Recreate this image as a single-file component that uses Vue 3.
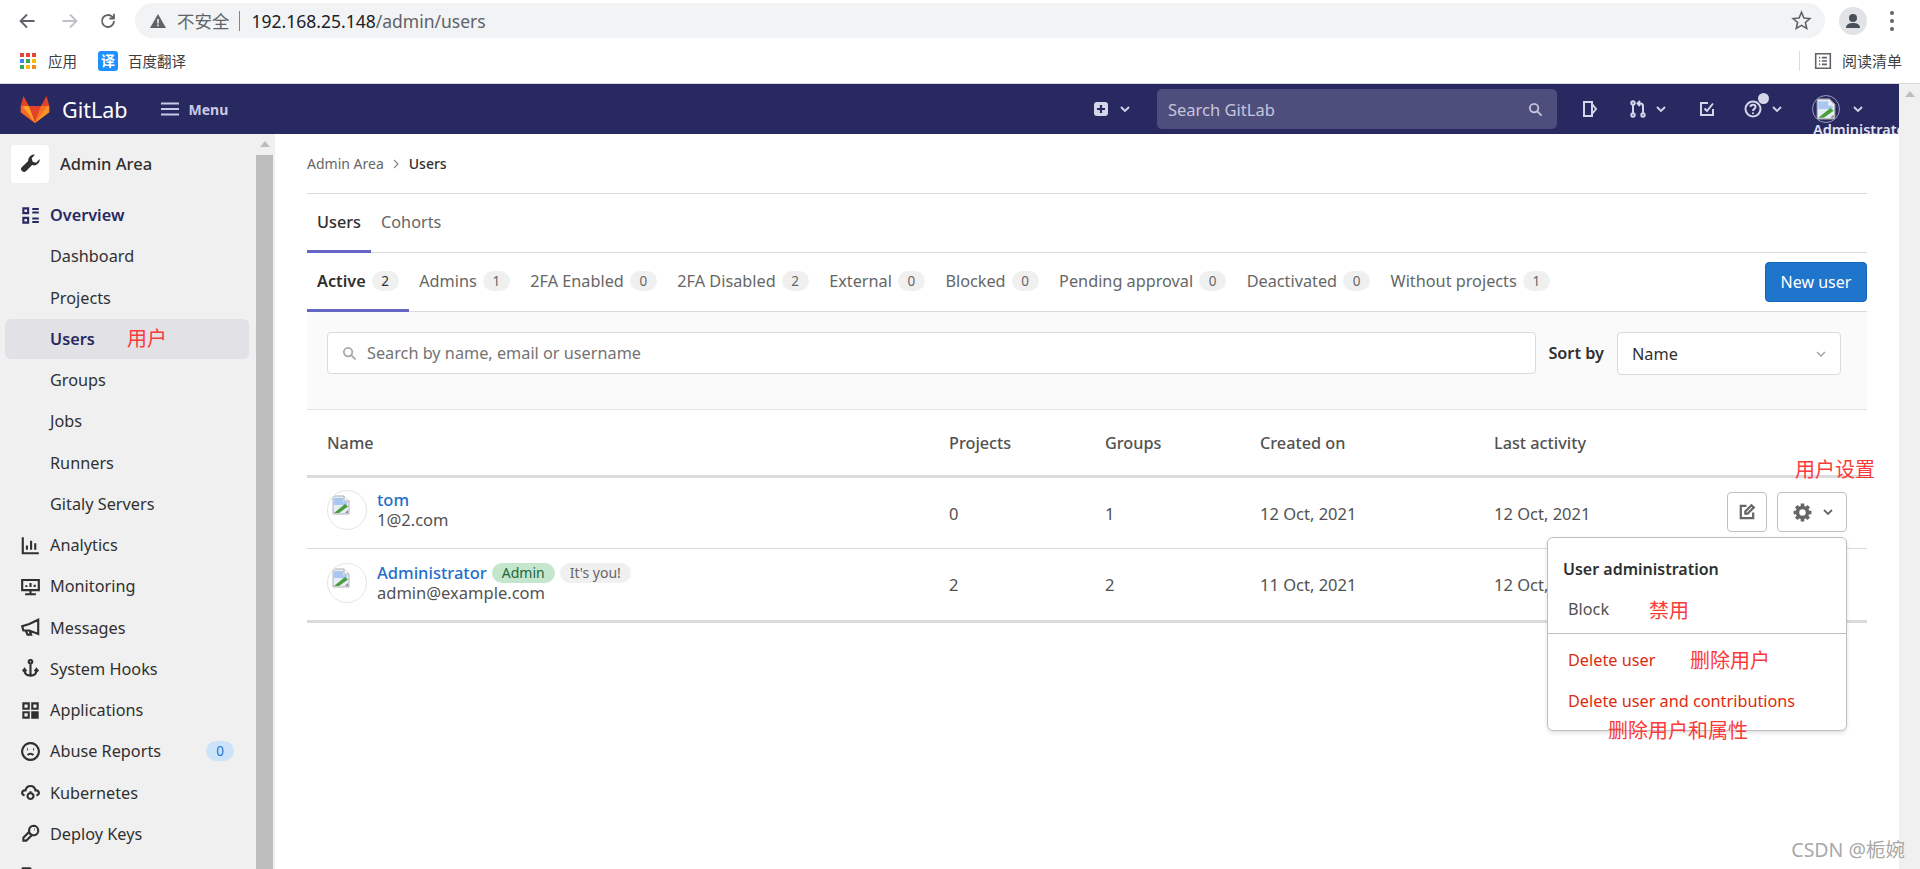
<template>
  <div class="page">
    <!-- browser chrome -->
    <div class="toolbar">
      <svg class="tb-icon back" viewBox="0 0 18 18"><path d="M16.5 9H2.5M9 2.5 2.5 9 9 15.5" /></svg>
      <svg class="tb-icon forward" viewBox="0 0 18 18"><path d="M1.5 9h14M9 2.5 15.5 9 9 15.5" /></svg>
      <svg class="tb-icon reload" viewBox="0 0 18 18"><path d="M15 9a6 6 0 1 1-1.8-4.3L15 6.5M15 1.8v4.7h-4.7" /></svg>
      <div class="omnibox">
        <svg class="warn" viewBox="0 0 16 16"><path d="M8 1 16 15H0z" fill="#5f6368" /><path d="M7.2 6h1.6v4.6H7.2zM7.2 11.6h1.6v1.6H7.2z" fill="#f1f3f4" /></svg>
        <span class="insecure">不安全</span>
        <span class="sep"></span>
        <span class="url">192.168.25.148<em>/admin/users</em></span>
        <svg class="star" viewBox="0 0 20 20"><path d="M10 2.2 12.3 7.6 18 8.1 13.7 11.9 15 17.6 10 14.6 5 17.6 6.3 11.9 2 8.1 7.7 7.6z" /></svg>
      </div>
      <div class="profile">
        <svg viewBox="0 0 28 28" width="28" height="28"><circle cx="14" cy="14" r="14" fill="#e1e3e7" /><circle cx="14" cy="11" r="4" fill="#4a5058" /><path d="M7 21c0-4 3.500-5 7-5s7 1 7 5z" fill="#4a5058" /></svg>
      </div>
      <div class="dots"><i></i><i></i><i></i></div>
    </div>
    <div class="bookmarks">
      <div class="apps"><i v-for="c in appColors" :key="c.id" :style="{ background: c.color }"></i></div>
      <span class="bm-text">应用</span>
      <span class="baidu">译</span>
      <span class="bm-text">百度翻译</span>
      <span class="bm-sep"></span>
      <svg class="reading" viewBox="0 0 16 16"><path d="M1.500 1.500h13v13h-13zM4.500 5h1M7 5h4.500M4.500 8h1M7 8h4.500M4.500 11h1M7 11h4.500" /></svg>
      <span class="bm-text">阅读清单</span>
    </div>

    <!-- gitlab navbar -->
    <div class="navrow">
      <header class="navbar">
        <svg class="logo" viewBox="0 0 30 28">
          <path d="M15 28 0.700 17.300 3.500 2 8.800 11h12.400L26.500 2l2.800 15.300z" fill="#e24329" />
          <path d="M15 28 8.800 11H0.700l-0 6.300z" fill="#fc6d26" opacity=".9" />
          <path d="M15 28 21.200 11h8.100v6.300z" fill="#fca326" opacity=".85" />
          <path d="M15 28 8.800 11H2.700z" fill="#fca326" />
          <path d="M15 28 21.200 11h6.100z" fill="#fc6d26" />
          <path d="M3.500 1 0.700 11h8.100zM26.500 1l2.800 10h-8.100z" fill="#e24329" />
        </svg>
        <span class="brand">GitLab</span>
        <svg class="burger" viewBox="0 0 18 14"><path d="M0 1.500h18M0 7h18M0 12.500h18" /></svg>
        <span class="menu">Menu</span>
        <div class="nav-right">
          <svg class="plus" viewBox="0 0 14 14"><rect width="14" height="14" rx="3" fill="#d5d5ea" /><path d="M7 3v8M3 7h8" stroke="#292961" stroke-width="2.200" /></svg>
          <svg class="chev first" viewBox="0 0 10 6"><path d="M1 1l4 4 4-4" /></svg>
          <div class="nav-search">
            <span>Search GitLab</span>
            <svg viewBox="0 0 16 16"><circle cx="6.500" cy="6.500" r="4.500" /><path d="M10 10l4.500 4.500" /></svg>
          </div>
          <svg class="nav-icon issues" viewBox="0 0 18 18"><path d="M3 2h8v14H3zM11 4l4 5-4 5" /></svg>
          <svg class="nav-icon mr" viewBox="0 0 18 18"><circle cx="4" cy="3" r="1.700" /><circle cx="4" cy="15" r="1.700" /><circle cx="14" cy="15" r="1.700" /><path d="M4 5v8M14 13V6c0-1.500-1-2.500-2.500-2.500H9M11 1 8.500 3.500 11 6" /></svg>
          <svg class="chev mr-chev" viewBox="0 0 10 6"><path d="M1 1l4 4 4-4" /></svg>
          <svg class="nav-icon todo" viewBox="0 0 18 18"><path d="M15 9v6H3V3h7M6.500 8.500 9 11l6-7.500" /></svg>
          <div class="help">
            <svg class="nav-icon" viewBox="0 0 18 18"><circle cx="9" cy="9" r="7.500" /><path d="M6.500 7c0-1.500 1.200-2.300 2.500-2.300s2.500.8 2.500 2.200c0 2-2.500 2-2.500 4M9 12.500v1.500" /></svg>
            <i></i>
          </div>
          <svg class="chev help-chev" viewBox="0 0 10 6"><path d="M1 1l4 4 4-4" /></svg>
          <div class="nav-user">
            <div class="nav-avatar"><svg viewBox="0 0 20 20" width="22" height="22"><path d="M2 1h11l5 5v13H2z" fill="#e8eef8" stroke="#b0b0b0" /><path d="M3 3h9v4l4 0v3H3z" fill="#a9c7f0" /><path d="M3 18l11-9 3 2.500L8 18z" fill="#4a9e3c" /><path d="M14 18l3-3v3z" fill="#888" /></svg></div>
            <span class="nav-username">Administrator</span>
          </div>
          <svg class="chev user-chev" viewBox="0 0 10 6"><path d="M1 1l4 4 4-4" /></svg>
        </div>
      </header>
      <div class="page-scroll head"><span class="arrow"></span></div>
    </div>

    <div class="body">
      <!-- sidebar -->
      <aside class="sidebar">
        <div class="side-inner">
          <div class="side-title">
            <span class="wrench">
              <svg viewBox="0 0 18 18"><path d="M17 4.800a5 5 0 0 1-6.600 4.700L5.300 14.600a2.500 2.500 0 1 1-3.600-3.500l5.300-5.200A5 5 0 0 1 12.800 .6L10 3.700l.9 2.900 2.900.8 2.900-2.900c.2.100.3.200.3.300z" /></svg>
            </span>
            <span>Admin Area</span>
          </div>
          <div
            v-for="item in sideItems"
            :key="item.label"
            class="side-item"
            :class="{ sub: !item.icon, active: item.active, current: item.current }"
          >
            <svg v-if="item.icon" class="side-icon" viewBox="0 0 16 16"><path :d="item.icon" /></svg>
            <span>{{ item.label }}</span>
            <span v-if="item.count !== undefined" class="side-count">{{ item.count }}</span>
            <span v-if="item.note" class="note side-note">{{ item.note }}</span>
          </div>
        </div>
        <div class="side-scroll">
          <span class="arrow"></span>
          <div class="side-thumb"></div>
        </div>
      </aside>

      <!-- content -->
      <main class="content">
        <div class="crumbs">
          <span>Admin Area</span>
          <svg viewBox="0 0 6 10"><path d="M1 1l4 4-4 4" /></svg>
          <b>Users</b>
        </div>
        <nav class="top-tabs">
          <span class="top-tab on">Users</span>
          <span class="top-tab">Cohorts</span>
        </nav>
        <div class="filter-row">
          <div v-for="tab in filterTabs" :key="tab.label" class="filter-tab" :class="{ on: tab.active }">
            <span>{{ tab.label }}</span>
            <span class="count">{{ tab.count }}</span>
          </div>
          <button class="new-user">New user</button>
        </div>
        <div class="filter-panel">
          <div class="search-box">
            <svg viewBox="0 0 16 16"><circle cx="6.500" cy="6.500" r="4.500" /><path d="M10 10l4.500 4.500" /></svg>
            <span>Search by name, email or username</span>
          </div>
          <span class="sort-label">Sort by</span>
          <div class="sort-select">
            <span>Name</span>
            <svg viewBox="0 0 10 6"><path d="M1 1l4 4 4-4" /></svg>
          </div>
        </div>

        <div class="table-head grid">
          <span>Name</span><span>Projects</span><span>Groups</span><span>Created on</span><span>Last activity</span>
        </div>
        <div v-for="user in users" :key="user.name" class="user-row grid" :class="{ last: user.last }">
          <div class="user-cell">
            <div class="avatar">
              <svg viewBox="0 0 20 20" width="20" height="20"><path d="M2 1h11l5 5v13H2z" fill="#e8eef8" stroke="#b0b0b0" /><path d="M13 1v5h5" fill="#fff" stroke="#b0b0b0" /><path d="M3 3h9v4l4 0v3H3z" fill="#a9c7f0" /><path d="M3 18l11-9 3 2.500L8 18z" fill="#4a9e3c" /><path d="M14 18l3-3v3z" fill="#888" /></svg>
            </div>
            <div class="user-text">
              <div class="user-name">
                <a>{{ user.name }}</a>
                <span v-if="user.isAdmin" class="pill green">Admin</span>
                <span v-if="user.isAdmin" class="pill grey">It's you!</span>
              </div>
              <div class="user-mail">{{ user.email }}</div>
            </div>
          </div>
          <span>{{ user.projects }}</span>
          <span>{{ user.groups }}</span>
          <span>{{ user.created }}</span>
          <span>{{ user.activity }}</span>
          <div v-if="user.actions" class="actions">
            <button class="act edit">
              <svg viewBox="0 0 16 16"><path d="M13.500 8.500v5h-11v-11h5M6.500 7.500v2h2L14 4l-2-2z" /></svg>
            </button>
            <button class="act gear">
              <svg class="gear-icon" viewBox="0 0 20 20"><circle cx="10" cy="10" r="4.800" /><path d="M10 1.500v3.500M10 15v3.500M1.500 10H5M15 10h3.500M4 4l2.500 2.500M13.500 13.500 16 16M16 4l-2.500 2.500M6.500 13.500 4 16" /></svg>
              <svg class="gear-chev" viewBox="0 0 10 6"><path d="M1 1l4 4 4-4" /></svg>
            </button>
            <span class="note settings-note">用户设置</span>
            <div class="dropdown">
              <div class="dd-title">User administration</div>
              <div class="dd-item">Block<span class="note block-note">禁用</span></div>
              <div class="dd-line"></div>
              <div class="dd-item red">Delete user<span class="note del-note">删除用户</span></div>
              <div class="dd-item red">Delete user and contributions</div>
              <span class="note all-note">删除用户和属性</span>
            </div>
          </div>
        </div>
      </main>
      <div class="page-scroll"></div>
    </div>
    <span class="watermark">CSDN @栀婉</span>
  </div>
</template>

<script setup>
const colors = ['#ea4335', '#ea4335', '#ea4335', '#4285f4', '#34a853', '#fbbc05', '#34a853', '#fbbc05', '#f28b1e']
const appColors = colors.map((color, id) => ({ id, color }))

const sideItems = [
  { label: 'Overview', active: true, icon: 'M2 2h4v4H2zM2 10h4v4H2zM9.500 2.500H15M9.500 5.500H15M9.500 10.500H15M9.500 13.500H15' },
  { label: 'Dashboard' },
  { label: 'Projects' },
  { label: 'Users', current: true, note: '用户' },
  { label: 'Groups' },
  { label: 'Jobs' },
  { label: 'Runners' },
  { label: 'Gitaly Servers' },
  { label: 'Analytics', icon: 'M1.500 1v13.500H15M5 8v3.500M8.500 4v7.500M12 6v5.500' },
  { label: 'Monitoring', icon: 'M1 2.500h14v8.500H1zM4.500 8.500V7M8 8.500V5M11.500 8.500V6.500M8 11v3M3.500 14.500h9' },
  { label: 'Messages', icon: 'M14.500 1.500v12L7 10.500H2L1 7l6-2zM4 10.500l1.500 3.500h3l-1.200-3' },
  { label: 'System Hooks', icon: 'M8 3.500V14M8 14c-3 0-5-1.500-5-4.500M8 14c3 0 5-1.500 5-4.500M1.500 10.500 3 8.500l1.500 2M11.500 10.500l1.500-2 1.500 2M8 .8a1.500 1.500 0 1 0 .01 0' },
  { label: 'Applications', icon: 'M2 2h4.500v4.500H2zM9.500 2H14v4.500H9.500zM2 9.500h4.500V14H2zM9.500 9.500H14V14H9.500zM11 11h1.500v1.500H11z' },
  { label: 'Abuse Reports', count: 0, icon: 'M8 1a7 7 0 1 0 .01 0M5 6.200h.8M10.200 6.200h.8M5.500 11c1.500-1.500 3.500-1.500 5 0' },
  { label: 'Kubernetes', icon: 'M3 10.500C1.500 10 .8 9 1 8c.3-1.300 1.500-2 2.800-1.800C4.300 3.800 6 2.500 8 2.500s3.700 1.300 4.200 3.700c1.300-.2 2.500.5 2.800 1.800.2 1-.5 2-2 2.500M8 8.500a2.500 2.500 0 1 0 .01 0M8 7v1M8 13v1M5.500 10h1M9.500 10h1' },
  { label: 'Deploy Keys', icon: 'M10.500 1.500a4 4 0 1 1-3.800 5.200L2 11.500V14h2.500l4.800-4.800a4 4 0 0 1 1.200-7.700zM11 4.500h.5' },
  { label: 'Labels', icon: 'M1.500 2h6l7 7-5.500 5.500-7.500-7z' }
]

const filterTabs = [
  { label: 'Active', count: 2, active: true },
  { label: 'Admins', count: 1 },
  { label: '2FA Enabled', count: 0 },
  { label: '2FA Disabled', count: 2 },
  { label: 'External', count: 0 },
  { label: 'Blocked', count: 0 },
  { label: 'Pending approval', count: 0 },
  { label: 'Deactivated', count: 0 },
  { label: 'Without projects', count: 1 }
]

const users = [
  { name: 'tom', email: '1@2.com', projects: 0, groups: 1, created: '12 Oct, 2021', activity: '12 Oct, 2021', actions: true },
  { name: 'Administrator', email: 'admin@example.com', projects: 2, groups: 2, created: '11 Oct, 2021', activity: '12 Oct, 2021', isAdmin: true, last: true }
]
</script>

<style>
html, body { margin: 0; overflow: hidden; background: #fff; }
</style>

<style scoped>
* { box-sizing: border-box; }
.page {
  position: relative;
  height: 869px;
  overflow: hidden;
  font-family: "Noto Sans", "Noto Sans CJK SC", sans-serif;
  font-size: 16.250px;
  color: #525252;
}

/* browser chrome */
.toolbar { height: 41px; display: flex; align-items: center; padding-bottom: 0; }
.tb-icon { width: 18px; height: 18px; fill: none; stroke: #5f6368; stroke-width: 1.800; flex: none; }
.back { margin-left: 18px; }
.forward { margin-left: 25px; stroke: #bdc1c6; }
.reload { margin-left: 20px; }
.omnibox {
  margin-left: 18px;
  width: 1690px;
  height: 35px;
  margin-top: 0;
  background: #f1f3f4;
  border-radius: 18px;
  display: flex;
  align-items: center;
  padding-left: 15px;
}
.warn { width: 16px; height: 16px; flex: none; }
.insecure { margin-left: 11px; font-size: 17.500px; color: #5f6368; }
.sep { width: 1px; height: 20px; background: #80868b; margin: 0 12px 0 9px; }
.url { font-size: 17.500px; color: #202124; }
.url em { font-style: normal; color: #5f6368; }
.star { width: 21px; height: 21px; margin-left: auto; margin-right: 13px; fill: none; stroke: #5f6368; stroke-width: 1.500; }
.profile { margin-left: 14px; width: 28px; height: 28px; }
.dots { margin-left: 23px; display: flex; flex-direction: column; gap: 4px; }
.dots i { width: 4px; height: 4px; border-radius: 50%; background: #5f6368; }

.bookmarks { height: 43px; display: flex; align-items: center; border-bottom: 1px solid #dadce0; padding-left: 20px; padding-bottom: 3px; }
.apps { width: 16px; height: 16px; display: grid; grid-template-columns: repeat(3, 4px); grid-template-rows: repeat(3, 4px); gap: 2px; }
.bm-text { font-size: 14.500px; color: #3c4043; margin-left: 12px; }
.baidu { margin-left: 21px; width: 20px; height: 20px; border-radius: 3px; background: #1e90ff; color: #fff; font-size: 14px; line-height: 20px; text-align: center; font-weight: 700; }
.baidu + .bm-text { margin-left: 10px; }
.bm-sep { margin-left: auto; width: 1px; height: 20px; background: #dadce0; }
.reading { width: 18px; height: 18px; margin-left: 14px; fill: none; stroke: #5f6368; stroke-width: 1.400; }
.reading + .bm-text { margin-left: 10px; margin-right: 18px; font-size: 15px; }

/* navbar */
.navrow { display: flex; height: 50px; }
.navbar { flex: 1; background: #292961; display: flex; align-items: center; padding-left: 20px; overflow: hidden; }
.logo { width: 30px; height: 28px; flex: none; }
.brand { margin-left: 12px; color: #fff; font-size: 21.500px; }
.burger { width: 18px; height: 14px; margin-left: 33px; fill: none; stroke: #c9c9e6; stroke-width: 2; }
.menu { margin-left: 10px; color: #c9c9e6; font-size: 14px; font-weight: 700; }
.nav-right { margin-left: auto; display: flex; align-items: center; }
.chev { width: 10px; height: 6px; fill: none; stroke: #d5d5ea; stroke-width: 1.800; flex: none; }
.plus { width: 14px; height: 14px; }
.chev.first { margin-left: 12px; }
.nav-search {
  margin-left: 27px;
  width: 400px;
  height: 40px;
  border-radius: 5px;
  background: #4e4e7d;
  color: #c5c5dc;
  display: flex;
  align-items: center;
  justify-content: space-between;
  padding: 0 14px 0 11px;
  font-size: 16.500px;
}
.nav-search svg { width: 15px; height: 15px; fill: none; stroke: #c5c5dc; stroke-width: 2; }
.nav-icon { width: 18px; height: 18px; fill: none; stroke: #d5d5ea; stroke-width: 2; flex: none; display: block; }
.issues { margin-left: 24px; }
.mr { margin-left: 30px; }
.mr-chev { margin-left: 9px; }
.todo { margin-left: 32px; }
.help { position: relative; margin-left: 28px; }
.help i { position: absolute; right: -7px; top: -7px; width: 11px; height: 11px; border-radius: 50%; background: #d5d5ea; }
.help-chev { margin-left: 10px; }
.nav-user { position: relative; margin-left: 30px; width: 28px; height: 28px; }
.nav-avatar { width: 28px; height: 28px; border-radius: 50%; border: 1px solid #9a9abf; overflow: hidden; display: flex; align-items: center; padding-left: 2px; }
.nav-username { position: absolute; left: 1px; top: 25px; color: #e4e4f2; font-size: 14.500px; font-weight: 600; line-height: 18px; white-space: nowrap; }
.user-chev { margin-left: 13px; margin-right: 36px; }
.page-scroll { width: 21px; background: #f0f0f0; flex: none; position: relative; }
.page-scroll.head { height: 50px; }
.arrow { position: absolute; left: 50%; top: 7px; margin-left: -5px; border: 5px solid transparent; border-top: 0; border-bottom: 6px solid #bdbdbd; }

/* sidebar */
.body { display: flex; height: 735px; }
.sidebar { width: 275px; flex: none; background: #f0f0f0; display: flex; overflow: hidden; }
.side-inner { width: 256px; flex: none; padding: 0 7px 0 5px; }
.side-title { height: 61px; margin-top: 0; padding: 11px 0 0 6px; display: flex; align-items: flex-start; color: #303030; font-weight: 500; font-size: 16.500px; }
.side-title > span:last-child { margin-left: 11px; line-height: 38px; }
.wrench { width: 38px; height: 38px; flex: none; border-radius: 4px; background: #fff; display: flex; align-items: center; justify-content: center; }
.wrench svg { width: 21px; height: 21px; fill: #303030; }
.side-item {
  position: relative;
  height: 40px;
  margin-bottom: 1.250px;
  border-radius: 6px;
  display: flex;
  align-items: center;
  color: #303030;
  padding-left: 16px;
}
.side-item.sub { padding-left: 45px; }
.side-icon { width: 19px; height: 19px; flex: none; margin-right: 10px; fill: none; stroke: #303030; stroke-width: 1.800; }
.side-item.active { color: #292961; font-weight: 600; }
.side-item.active .side-icon { stroke: #292961; }
.side-item.current { background: #e1e1e6; color: #292961; font-weight: 600; }
.side-count { margin-left: auto; margin-right: 15px; width: 28px; height: 20px; border-radius: 10px; background: #cbe2f9; color: #1f75cb; font-size: 13.500px; line-height: 20px; text-align: center; }
.side-scroll { position: relative; width: 17px; flex: none; }
.side-thumb { position: absolute; left: 0; right: 0; top: 21px; bottom: 0; background: #bdbdbd; }

/* content */
.content { flex: 1; min-width: 0; padding: 0 32px; position: relative; }
.crumbs { height: 59px; display: flex; align-items: center; font-size: 14px; color: #666; }
.crumbs svg { width: 6px; height: 10px; margin: 0 10px 0 9px; fill: none; stroke: #888; stroke-width: 1.200; }
.crumbs b { font-weight: 500; color: #303030; }
.top-tabs { height: 60px; border-top: 1px solid #dbdbdb; border-bottom: 1px solid #dbdbdb; display: flex; }
.top-tab { padding: 0 10px; margin-bottom: -1px; line-height: 57px; color: #666; }
.top-tab.on { color: #303030; font-weight: 500; border-bottom: 3px solid #6666c4; }
.filter-row { height: 59px; border-bottom: 1px solid #dbdbdb; display: flex; }
.filter-tab { height: 59px; display: flex; align-items: center; padding: 0 10.500px 0 10px; gap: 6px; color: #666; font-size: 16.250px; border-bottom: 3px solid transparent; white-space: nowrap; }
.filter-tab.on { color: #303030; font-weight: 600; border-bottom-color: #6666c4; }
.count { width: 27px; height: 20px; border-radius: 10px; background: #f0f0f0; font-size: 13.500px; font-weight: 400; line-height: 20px; text-align: center; color: #666; }
.filter-tab.on .count { color: #303030; }
.new-user { margin-left: auto; margin-top: 9px; width: 102px; height: 40px; border: 1px solid #1068bf; border-radius: 4px; background: #1f75cb; color: #fff; font: inherit; font-size: 16px; padding: 0; }
.filter-panel { height: 98px; background: #fafafa; border-bottom: 1px solid #e5e5e5; display: flex; align-items: flex-start; padding: 20px 26px 0 20px; }
.search-box { flex: 1; height: 42px; background: #fff; border: 1px solid #dbdbdb; border-radius: 4px; display: flex; align-items: center; padding-left: 14px; color: #737373; }
.search-box svg { width: 15px; height: 15px; margin-right: 10px; fill: none; stroke: #aaa; stroke-width: 2; }
.sort-label { margin-left: 12px; line-height: 42px; color: #303030; font-weight: 600; }
.sort-select { margin-left: 13px; width: 224px; height: 43px; background: #fff; border: 1px solid #dbdbdb; border-radius: 4px; display: flex; align-items: center; justify-content: space-between; padding: 0 14px 0 14px; color: #303030; }
.sort-select svg { width: 10px; height: 6px; fill: none; stroke: #aaa; stroke-width: 1.600; }

.grid { display: grid; grid-template-columns: 622px 156px 155px 234px 1fr; padding-left: 20px; align-items: center; }
.table-head { height: 68px; border-bottom: 3px solid #dbdbdb; color: #525252; font-weight: 500; }
.user-row { position: relative; height: 71px; border-bottom: 1px solid #dbdbdb; color: #525252; font-size: 16.500px; }
.user-row.last { border-bottom: 3px solid #dbdbdb; height: 74px; }
.user-cell { display: flex; align-items: center; margin-top: -6px; }
.last .user-cell { margin-top: -3px; }
.avatar { width: 40px; height: 40px; border-radius: 50%; border: 1px solid #e5e5e5; overflow: hidden; padding: 4px 0 0 3px; flex: none; }
.user-text { margin-left: 10px; line-height: 20px; margin-top: 0; }
.user-name { display: flex; align-items: center; gap: 5px; }
.user-name a { color: #1f6fcb; font-weight: 500; }
.pill { height: 20px; line-height: 20px; border-radius: 10px; font-size: 14px; }
.pill.green { width: 63px; text-align: center; background: #c3e6cd; color: #24663b; }
.pill.grey { width: 71px; text-align: center; background: #f0f0f0; color: #666; }
.user-mail { color: #525252; }
.actions { position: absolute; left: 0; top: 0; right: 0; bottom: 0; pointer-events: none; }
.act { position: absolute; top: 14px; height: 40px; border: 1px solid #bfbfbf; border-radius: 4px; background: #fff; padding: 0; display: flex; align-items: center; justify-content: center; }
.edit { left: 1420px; width: 40px; }
.edit svg { width: 18px; height: 18px; fill: none; stroke: #666; stroke-width: 2; }
.gear { left: 1470px; width: 70px; }
.gear-icon { width: 21px; height: 21px; fill: none; stroke: #666; stroke-width: 3.400; }
.gear-chev { width: 10px; height: 6px; margin-left: 10px; fill: none; stroke: #666; stroke-width: 1.800; }
.dropdown {
  position: absolute;
  left: 1240px;
  top: 59px;
  width: 300px;
  height: 194px;
  background: #fff;
  border: 1px solid #bfbfbf;
  border-radius: 6px;
  box-shadow: 0 2px 4px rgba(0, 0, 0, .12);
  z-index: 2;
}
.dd-title { margin: 20px 0 0 15px; line-height: 22px; color: #303030; font-weight: 600; font-size: 16px; }
.dd-item { position: relative; padding-left: 20px; line-height: 22px; color: #525252; height: 22px; font-size: 16.250px; }
.dd-title + .dd-item { margin-top: 18px; }
.dd-line { margin-top: 13px; height: 1px; background: #bfbfbf; }
.dd-item.red { color: #dd2b0e; margin-top: 16px; }
.dd-line + .dd-item { margin-top: 15px; }
.dd-item.red + .dd-item.red { margin-top: 19px; }

/* red annotations pasted over the shot */
.note { position: absolute; color: #fb3a3a; font-size: 20px; font-weight: 400; line-height: 26px; white-space: nowrap; font-family: "Noto Sans CJK SC", sans-serif; }
.side-note { left: 122px; top: 6px; }
.settings-note { left: 1488px; top: -22px; }
.block-note { left: 101px; top: -1px; }
.del-note { left: 142px; top: -2px; }
.all-note { left: 60px; top: 179px; }

.watermark { position: absolute; right: 15px; bottom: 6px; font-size: 19.500px; line-height: 26px; color: #a8a8a8; }
</style>
